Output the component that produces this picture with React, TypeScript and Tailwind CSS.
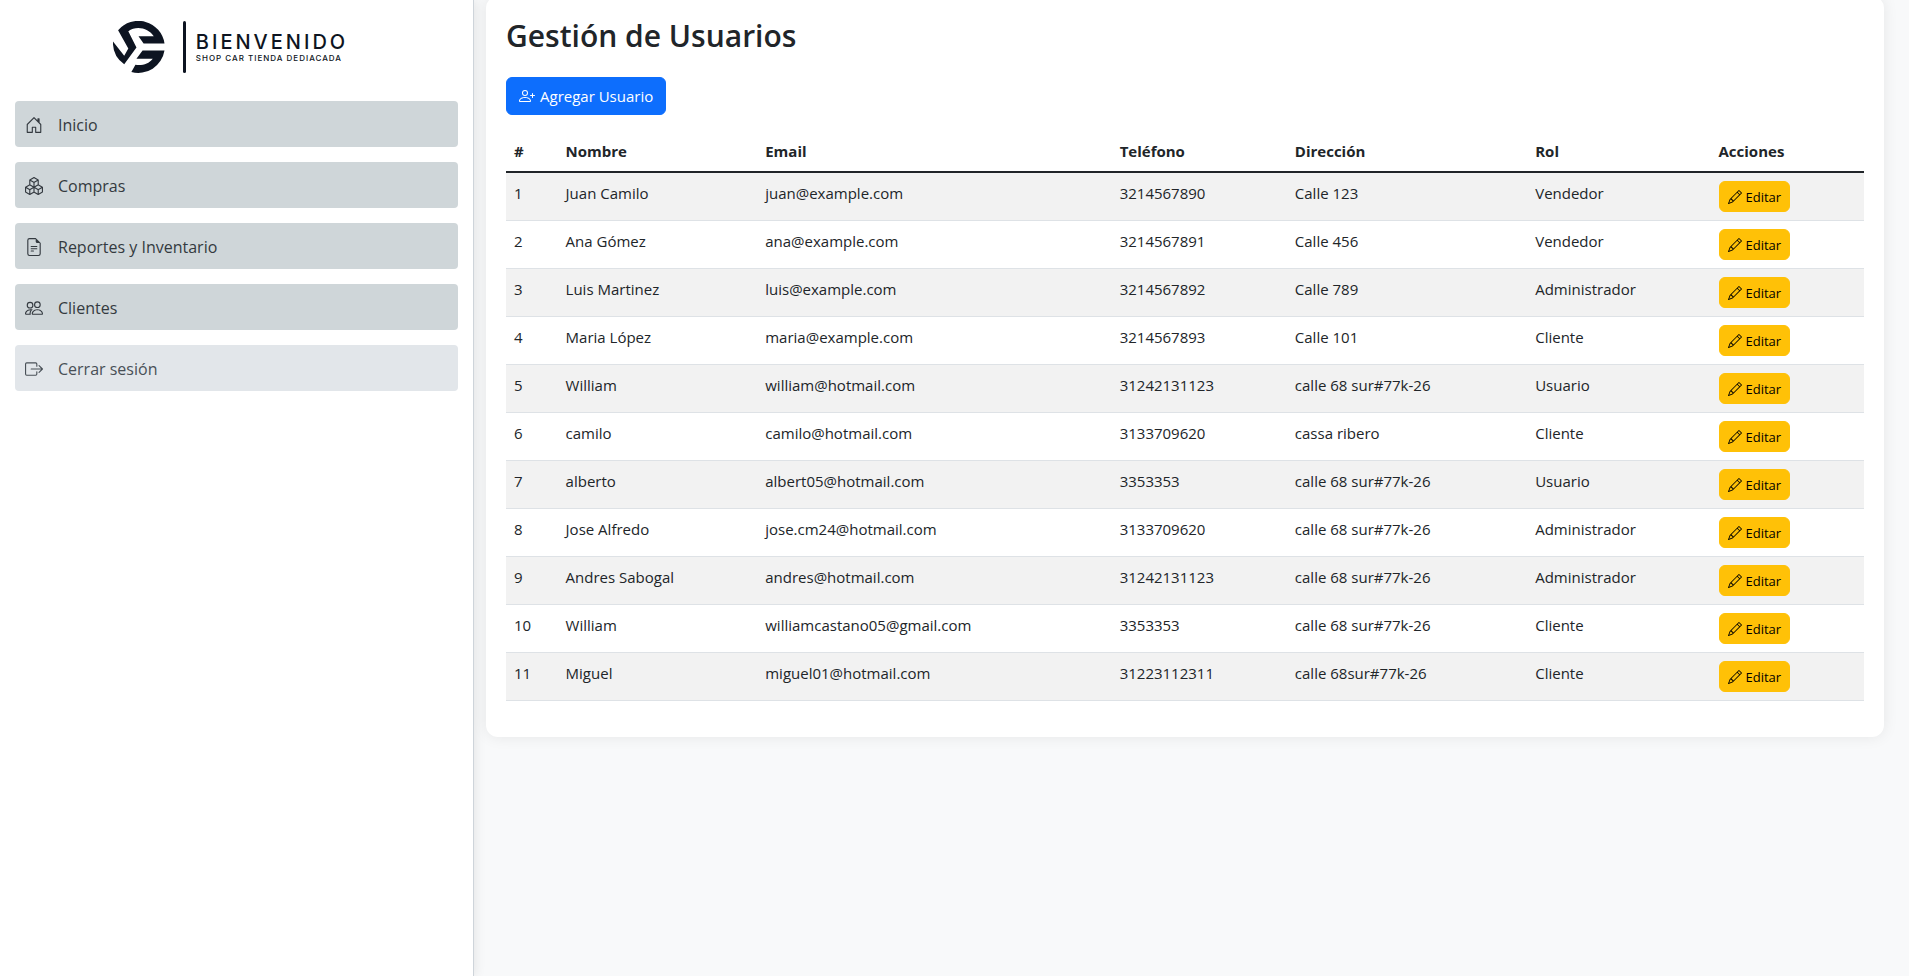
import React from "react";
import { BsHouseDoor, BsBoxes, BsFileEarmarkText, BsPeople, BsBoxArrowRight, BsPersonPlus, BsPencil } from "react-icons/bs";

const menu = [
  { label: "Inicio", Icon: BsHouseDoor, style: "bg-[#cfd6d9] text-[#343a40]" },
  { label: "Compras", Icon: BsBoxes, style: "bg-[#cfd6d9] text-[#343a40]" },
  { label: "Reportes y Inventario", Icon: BsFileEarmarkText, style: "bg-[#cfd6d9] text-[#343a40]" },
  { label: "Clientes", Icon: BsPeople, style: "bg-[#cfd6d9] text-[#343a40]" },
  { label: "Cerrar sesión", Icon: BsBoxArrowRight, style: "bg-[#e2e6ea] text-[#495057]" },
];

const users = [
  ["Juan Camilo", "juan@example.com", "3214567890", "Calle 123", "Vendedor"],
  ["Ana Gómez", "ana@example.com", "3214567891", "Calle 456", "Vendedor"],
  ["Luis Martinez", "luis@example.com", "3214567892", "Calle 789", "Administrador"],
  ["Maria López", "maria@example.com", "3214567893", "Calle 101", "Cliente"],
  ["William", "william@hotmail.com", "31242131123", "calle 68 sur#77k-26", "Usuario"],
  ["camilo", "camilo@hotmail.com", "3133709620", "cassa ribero", "Cliente"],
  ["alberto", "albert05@hotmail.com", "3353353", "calle 68 sur#77k-26", "Usuario"],
  ["Jose Alfredo", "jose.cm24@hotmail.com", "3133709620", "calle 68 sur#77k-26", "Administrador"],
  ["Andres Sabogal", "andres@hotmail.com", "31242131123", "calle 68 sur#77k-26", "Administrador"],
  ["William", "williamcastano05@gmail.com", "3353353", "calle 68 sur#77k-26", "Cliente"],
  ["Miguel", "miguel01@hotmail.com", "31223112311", "calle 68sur#77k-26", "Cliente"],
];

const columns = [
  { title: "#", width: "w-[3.8%]" },
  { title: "Nombre", width: "w-[14.7%]" },
  { title: "Email", width: "w-[26.1%]" },
  { title: "Teléfono", width: "w-[12.9%]" },
  { title: "Dirección", width: "w-[17.7%]" },
  { title: "Rol", width: "w-[13.5%]" },
  { title: "Acciones", width: "w-[11.3%]" },
];

function Logo() {
  return (
    <div className="flex items-center justify-center gap-[10px] pr-3 text-[#0d1421]">
      <div className="flex items-center gap-[18px]">
        <svg viewBox="0 0 51 51" className="size-[52px]" fill="currentColor" aria-hidden="true">
          <path d="M5 9A26 26 0 0 1 50.500 22H30L25 15H40C35 7 23 4 15 10L23 26L11 42.500A26 26 0 0 1 0 20L11 34L15 27Z" />
          <path d="M50.500 29H29L23 37H39C35 42 29 44 22 43L18 50A26 26 0 0 0 50.500 29Z" />
        </svg>
        <span className="h-[52px] w-[3px] rounded bg-[#0d1421]" />
      </div>
      <div className="flex flex-col pt-px font-['Inter',sans-serif] font-medium">
        <span className="text-[20px] leading-5 tracking-[3px]">BIENVENIDO</span>
        <span className="text-[8px] leading-3 tracking-[1px]">SHOP CAR TIENDA DEDIACADA</span>
      </div>
    </div>
  );
}

export default function App() {
  return (
    <div className="flex min-h-screen bg-[#f8f9fa] font-['Open_Sans','Noto_Sans',sans-serif] text-[#212529]">
      <aside className="w-[474px] shrink-0 border-r border-[#ced4da] bg-white px-[15px] pt-[21px] shadow-[2px_0_10px_rgba(0,0,0,0.08)]">
        <Logo />
        <nav className="mt-7 flex flex-col gap-[15px]">
          {menu.map(({ label, Icon, style }) => (
            <a key={label} href="#" className={`flex h-[46px] items-center gap-[15px] rounded px-[10px] pt-px text-base ${style}`}>
              <Icon className="size-[18px]" aria-hidden="true" />
              {label}
            </a>
          ))}
        </nav>
      </aside>
      <main className="min-w-0 flex-1 pr-[25px] pl-3">
        <section className="-mt-1 rounded-xl bg-white px-5 pt-[21px] pb-9 shadow-[0_0_15px_rgba(0,0,0,0.08)]">
          <h2 className="text-[30px] leading-[38px] font-semibold">Gestión de Usuarios</h2>
          <button type="button" className="mt-[22px] flex h-[38px] items-center gap-[5px] rounded-md border border-[#0d6efd] bg-[#0d6efd] px-3 text-[15px] text-white">
            <BsPersonPlus className="size-4" aria-hidden="true" />
            Agregar Usuario
          </button>
          <table className="mt-4 w-full table-fixed border-collapse text-left text-[15px] leading-6">
            <thead>
              <tr className="border-b-2 border-[#212529]">
                {columns.map(({ title, width }) => (
                  <th key={title} scope="col" className={`p-2 font-bold ${width}`}>{title}</th>
                ))}
              </tr>
            </thead>
            <tbody>
              {users.map((user, i) => (
                <tr key={i} className="h-12 border-b border-[#dee2e6] align-top odd:bg-[#f2f2f2]">
                  <td className="p-2">{i + 1}</td>
                  {user.map((value, j) => (
                    <td key={j} className="p-2">{value}</td>
                  ))}
                  <td className="p-2">
                    <button type="button" className="flex h-[31px] items-center gap-1 rounded-md border border-[#ffc107] bg-[#ffc107] px-2 text-[13px] text-black">
                      <BsPencil className="size-[14px]" aria-hidden="true" />
                      Editar
                    </button>
                  </td>
                </tr>
              ))}
            </tbody>
          </table>
        </section>
      </main>
    </div>
  );
}
